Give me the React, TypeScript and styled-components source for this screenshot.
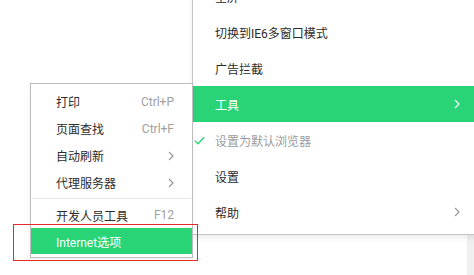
import React from "react";
import styled, { createGlobalStyle } from "styled-components";

const GlobalStyle = createGlobalStyle`
  html, body {
    margin: 0;
    padding: 0;
    background: #fff;
    overflow: hidden;
  }
  body {
    font-family: Roboto, "Noto Sans CJK SC", sans-serif;
    font-size: 12px;
    color: #2b2b2b;
  }
`;

const GREEN = "#28d475";

const Page = styled.div`
  position: relative;
  display: flex;
  width: 474px;
  height: 275px;
  overflow: hidden;
`;

const Content = styled.div`
  flex: 1;
`;

const Scrollbar = styled.div`
  width: 7px;
  background: #f0f0f0;
`;

const MainMenu = styled.ul`
  position: absolute;
  left: 192px;
  top: -24px;
  width: 290px;
  margin: 0;
  padding: 1px 0 4px;
  list-style: none;
  background: #fff;
  border: 1px solid #c4c4c4;
  box-sizing: border-box;
  box-shadow: 0 3px 6px rgba(0, 0, 0, 0.08);
`;

const MainItem = styled.li<{ $active?: boolean; $disabled?: boolean }>`
  display: flex;
  align-items: center;
  height: 36px;
  padding-right: 21px;
  background: ${({ $active }) => ($active ? GREEN : "transparent")};
  color: ${({ $active, $disabled }) =>
    $active ? "#fff" : $disabled ? "#9c9c9c" : "#2b2b2b"};
`;

const IconSlot = styled.span`
  display: flex;
  align-items: center;
  width: 22px;
  padding-left: 1px;
  box-sizing: border-box;
`;

const Label = styled.span`
  flex: 1;
  white-space: nowrap;
`;

const Shortcut = styled.span`
  color: #a0a0a0;
  white-space: nowrap;
`;

const SubMenu = styled.ul`
  position: absolute;
  left: 30px;
  top: 83px;
  width: 163px;
  margin: 0;
  padding: 4px 0 3px;
  list-style: none;
  background: #fff;
  border: 1px solid #bdbdbd;
  box-sizing: border-box;
  box-shadow: 0 2px 5px rgba(0, 0, 0, 0.06);
`;

const SubItem = styled.li<{ $active?: boolean; $h?: number }>`
  display: flex;
  align-items: center;
  height: ${({ $h }) => $h ?? 27}px;
  padding: 0 18px 0 25px;
  background: ${({ $active }) => ($active ? GREEN : "transparent")};
  color: ${({ $active }) => ($active ? "#fff" : "#2b2b2b")};
`;

const Separator = styled.li`
  height: 1px;
  margin: 2px 1px 3px;
  background: #e8e8e8;
`;

const Annotation = styled.div`
  position: absolute;
  left: 13px;
  top: 224px;
  width: 185px;
  height: 37px;
  border: 1px solid #e42b2b;
  box-sizing: border-box;
  pointer-events: none;
`;

function Chevron({ color = "#999" }: { color?: string }) {
  return (
    <svg width="6" height="10" viewBox="0 0 6 10">
      <path d="M1 1l4 4-4 4" fill="none" stroke={color} strokeWidth="1.2" />
    </svg>
  );
}

function Check() {
  return (
    <svg width="11" height="9" viewBox="0 0 11 9">
      <path d="M0.8 4.6l3.2 3.2L10.2 1.2" fill="none" stroke={GREEN} strokeWidth="1.3" />
    </svg>
  );
}

export default function App() {
  return (
    <>
      <GlobalStyle />
      <Page>
        <Content />
        <Scrollbar />

        <MainMenu>
          <MainItem>
            <IconSlot />
            <Label>全屏</Label>
            <Shortcut>F11</Shortcut>
          </MainItem>
          <MainItem>
            <IconSlot />
            <Label>切换到IE6多窗口模式</Label>
          </MainItem>
          <MainItem>
            <IconSlot />
            <Label>广告拦截</Label>
          </MainItem>
          <MainItem $active>
            <IconSlot />
            <Label>工具</Label>
            <Chevron color="#fff" />
          </MainItem>
          <MainItem $disabled>
            <IconSlot>
              <Check />
            </IconSlot>
            <Label>设置为默认浏览器</Label>
          </MainItem>
          <MainItem>
            <IconSlot />
            <Label>设置</Label>
          </MainItem>
          <MainItem>
            <IconSlot />
            <Label>帮助</Label>
            <Chevron />
          </MainItem>
        </MainMenu>

        <SubMenu>
          <SubItem>
            <Label>打印</Label>
            <Shortcut>Ctrl+P</Shortcut>
          </SubItem>
          <SubItem>
            <Label>页面查找</Label>
            <Shortcut>Ctrl+F</Shortcut>
          </SubItem>
          <SubItem>
            <Label>自动刷新</Label>
            <Chevron />
          </SubItem>
          <SubItem>
            <Label>代理服务器</Label>
            <Chevron />
          </SubItem>
          <Separator />
          <SubItem $h={26}>
            <Label>开发人员工具</Label>
            <Shortcut>F12</Shortcut>
          </SubItem>
          <SubItem $h={26} $active>
            <Label>Internet选项</Label>
          </SubItem>
        </SubMenu>

        <Annotation />
      </Page>
    </>
  );
}
